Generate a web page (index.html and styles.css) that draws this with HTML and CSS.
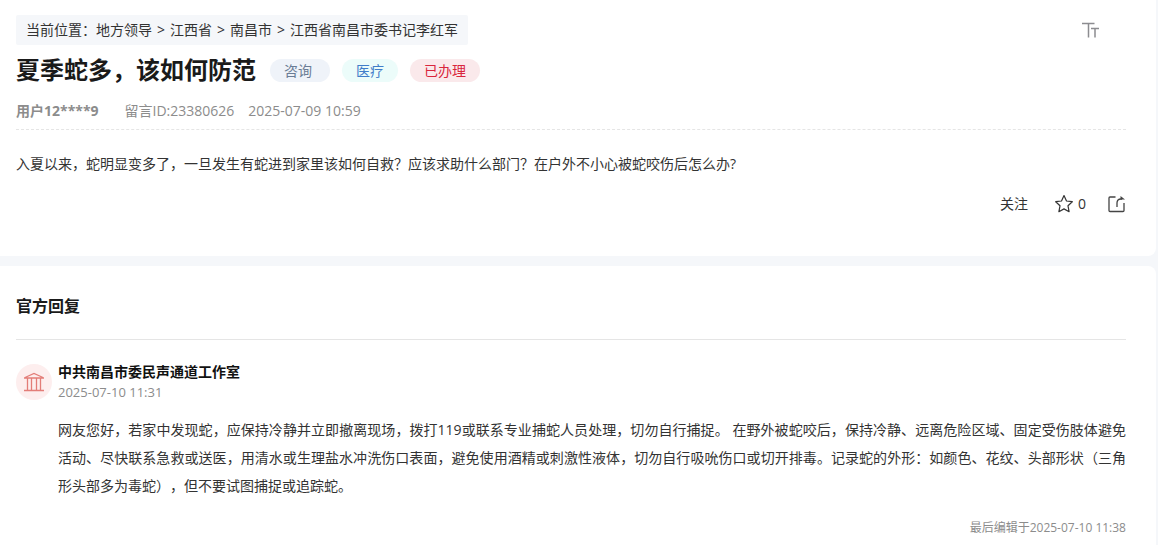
FILE: index.html
```html
<!DOCTYPE html>
<html lang="zh-CN">
<head>
    <meta charset="UTF-8">
    <meta name="viewport" content="width=device-width, initial-scale=1.0">
    <title>夏季蛇多，该如何防范</title>
    <link rel="stylesheet" href="styles.css">
</head>
<body>
    <main>
        <section class="panel message">
            <div class="top-bar">
                <nav class="breadcrumb">
                    <span>当前位置：<a href="#">地方领导</a></span>
                    <span>&gt;</span>
                    <a href="#">江西省</a>
                    <span>&gt;</span>
                    <a href="#">南昌市</a>
                    <span>&gt;</span>
                    <a href="#">江西省南昌市委书记李红军</a>
                </nav>
                <button class="icon-button font-size" type="button" aria-label="字体大小">
                    <svg width="18" height="16" viewBox="0 0 18 16" fill="none" stroke="#8c8c90" stroke-width="1.5">
                        <path d="M0 1.500H12.500M6.500 1.500V15.500M9 6.500H17M13 6.500V15.500"/>
                    </svg>
                </button>
            </div>

            <div class="title-row">
                <h1>夏季蛇多，该如何防范</h1>
                <span class="tag tag-type">咨询</span>
                <span class="tag tag-field">医疗</span>
                <span class="tag tag-state">已办理</span>
            </div>

            <div class="meta">
                <strong>用户12****9</strong>
                <span>留言ID:23380626</span>
                <time>2025-07-09 10:59</time>
            </div>

            <p class="question">入夏以来，蛇明显变多了，一旦发生有蛇进到家里该如何自救？应该求助什么部门？在户外不小心被蛇咬伤后怎么办?</p>

            <div class="actions">
                <button class="icon-button follow" type="button">关注</button>
                <button class="icon-button" type="button" aria-label="收藏 0">
                    <svg width="20" height="20" viewBox="0 0 20 20" fill="none" stroke="#333" stroke-width="1.2" stroke-linejoin="round">
                        <path d="M10 1.500L12.500 7L18.300 7.700L14 11.800L15.100 17.700L10 14.900L4.900 17.700L6 11.800L1.700 7.700L7.500 7Z"/>
                    </svg>
                    <span>0</span>
                </button>
                <button class="icon-button" type="button" aria-label="分享">
                    <svg width="18" height="18" viewBox="0 0 18 18" fill="none" stroke="#444" stroke-width="1.3">
                        <path d="M7.500 2H2Q1 2 1 3V15.500Q1 16.500 2 16.500H15Q16 16.500 16 15.500V8"/>
                        <path d="M9 12V8Q9 4 13 4H14"/>
                        <path d="M12.500 1L17 4.500H12.500Z" fill="#444" stroke="none"/>
                    </svg>
                </button>
            </div>
        </section>

        <section class="panel reply">
            <h2>官方回复</h2>
            <article>
                <header class="office">
                    <div class="avatar">
                        <svg width="20" height="20" viewBox="0 0 20 20" fill="none" stroke="#e37d78" stroke-width="1.3">
                            <path d="M1 5.500L10 1.500L19 5.500M0 6H20M0 18.500H20"/>
                            <path d="M3.500 6V18M7.500 6V18M12.500 6V18M16.500 6V18"/>
                        </svg>
                    </div>
                    <div>
                        <h3>中共南昌市委民声通道工作室</h3>
                        <time>2025-07-10 11:31</time>
                    </div>
                </header>
                <p class="answer">网友您好，若家中发现蛇，应保持冷静并立即撤离现场，拨打119或联系专业捕蛇人员处理，切勿自行捕捉。 在野外被蛇咬后，保持冷静、远离危险区域、固定受伤肢体避免活动、尽快联系急救或送医，用清水或生理盐水冲洗伤口表面，避免使用酒精或刺激性液体，切勿自行吸吮伤口或切开排毒。记录蛇的外形：如颜色、花纹、头部形状（三角形头部多为毒蛇），但不要试图捕捉或追踪蛇。</p>
                <footer>最后编辑于2025-07-10 11:38</footer>
            </article>
        </section>
    </main>
</body>
</html>
```
FILE: styles.css
```css
* {
    box-sizing: border-box;
}

body {
    margin: 0;
    background: #f5f7fa;
    color: #333;
    font-family: "Open Sans", "Noto Sans CJK SC", sans-serif;
    font-size: 14px;
    line-height: 20px;
    text-spacing-trim: space-all;
}

main {
    display: flex;
    flex-direction: column;
    gap: 10px;
    min-height: 100vh;
    margin-right: 2px;
}

h1,
h2,
h3,
p {
    margin: 0;
}

.panel {
    padding: 0 30px 0 16px;
    background: #fff;
}

.message {
    padding-top: 15px;
    padding-bottom: 42px;
    border-bottom-right-radius: 8px;
}

.top-bar {
    display: flex;
    align-items: center;
    justify-content: space-between;
}

.breadcrumb {
    display: flex;
    gap: 5px;
    padding: 5px 10px;
    background: #f5f7fa;
    border-radius: 2px;
}

.breadcrumb a {
    color: inherit;
    text-decoration: none;
}

.icon-button {
    display: flex;
    align-items: center;
    gap: 4px;
    padding: 0;
    border: none;
    background: none;
    color: inherit;
    font: inherit;
    cursor: pointer;
}

.font-size {
    margin-right: 26px;
}

.title-row {
    display: flex;
    align-items: center;
    gap: 12px;
    height: 50px;
}

h1 {
    margin-right: 2px;
    color: #1a1a1a;
    font-size: 24px;
    line-height: 32px;
}

.tag {
    padding: 0 14px;
    border-radius: 12px;
    line-height: 23px;
}

.tag-type {
    padding-right: 18px;
    background: #eff3f9;
    color: #6a7c95;
}

.tag-field {
    background: #ecfcfa;
    color: #417dc9;
}

.tag-state {
    background: #fae9eb;
    color: #d9263d;
}

.meta {
    display: flex;
    gap: 14px;
    padding: 6px 0 8px;
    border-bottom: 1px dashed #e5e5e5;
    color: #8c8c8c;
}

.meta strong {
    margin-right: 12px;
}

.question {
    padding: 20px 0 16px;
    line-height: 28px;
}

.actions {
    display: flex;
    justify-content: flex-end;
    gap: 22px;
}

.follow {
    margin-right: 4px;
}

.reply {
    flex: 1;
    padding-bottom: 6px;
    border-top-right-radius: 8px;
}

h2 {
    padding: 28px 0 21px;
    border-bottom: 1px solid #e5e5e5;
    color: #1a1a1a;
    font-size: 16px;
    line-height: 24px;
}

.office {
    display: flex;
    align-items: center;
    gap: 6px;
    padding-top: 22px;
}

.avatar {
    display: flex;
    align-items: center;
    justify-content: center;
    width: 36px;
    height: 36px;
    border-radius: 50%;
    background: #fdeeee;
}

h3 {
    color: #111;
    font-size: 14px;
    line-height: 20px;
}

.office time {
    display: block;
    color: #8c8c8c;
    font-size: 13px;
    line-height: 20px;
}

.answer {
    padding: 14px 0 18px 42px;
    line-height: 28px;
    text-align: justify;
}

footer {
    color: #8c8c8c;
    font-size: 12px;
    line-height: 20px;
    text-align: right;
}
```
